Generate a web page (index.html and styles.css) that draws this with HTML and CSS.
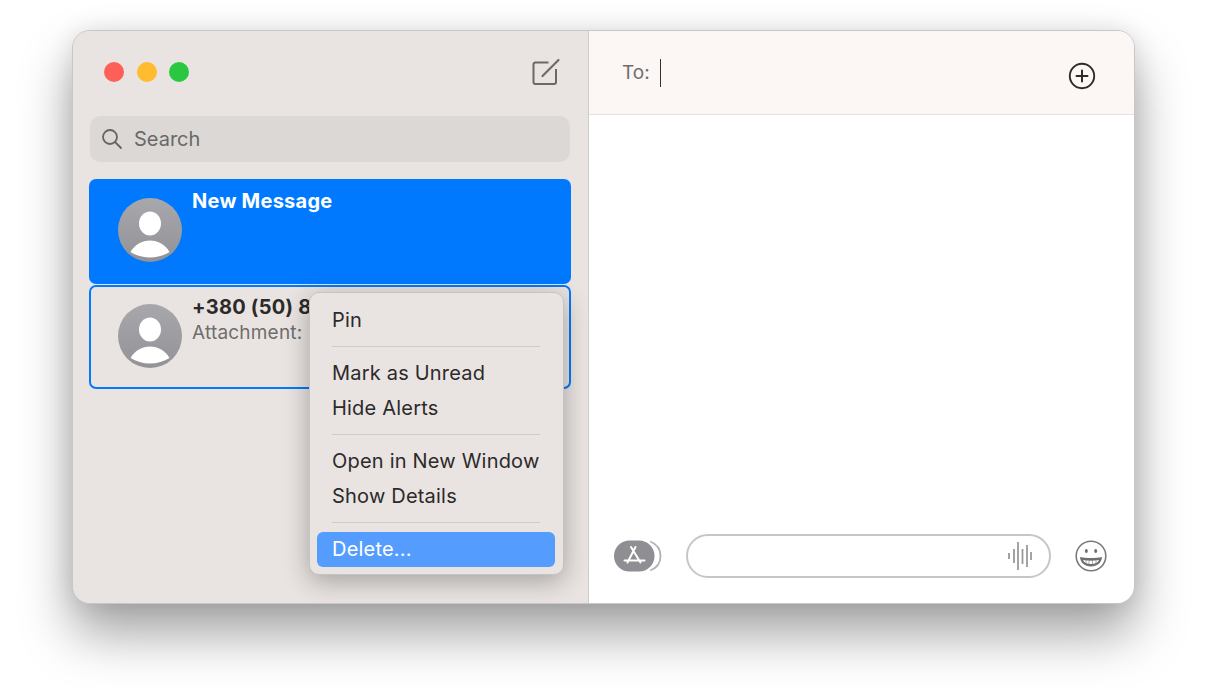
FILE: index.html
```html
<!DOCTYPE html>
<html lang="en">
<head>
<meta charset="utf-8">
<title>Messages</title>
<link rel="stylesheet" href="styles.css">
</head>
<body>
<div class="window">
  <aside class="sidebar">
    <div class="titlebar">
      <div class="lights">
        <span class="light red"></span>
        <span class="light yellow"></span>
        <span class="light green"></span>
      </div>
      <svg class="compose" width="30" height="30" viewBox="0 0 30 30" fill="none" stroke="#6a6868">
        <path d="M17.500 5.500H4.500a2 2 0 0 0-2 2V25a2 2 0 0 0 2 2H23a2 2 0 0 0 2-2V12" stroke-width="2"/>
        <path d="M11.500 19 27.500 3" stroke-width="2.200" stroke-linecap="round"/>
      </svg>
    </div>
    <div class="search">
      <svg width="22" height="22" viewBox="0 0 22 22" fill="none" stroke="#666464" stroke-width="1.800">
        <circle cx="9" cy="9" r="7"/>
        <path d="M14 14l6 6" stroke-linecap="round"/>
      </svg>
      <span>Search</span>
    </div>
    <div class="list">
      <div class="row selected">
        <svg class="avatar" viewBox="0 0 64 64"><use href="#person"/></svg>
        <div class="row-text"><div class="name">New Message</div></div>
      </div>
      <div class="row focused">
        <svg class="avatar" viewBox="0 0 64 64"><use href="#person"/></svg>
        <div class="row-text">
          <div class="name">+380 (50) 8</div>
          <div class="preview">Attachment:</div>
        </div>
      </div>
    </div>
    <div class="menu">
      <div class="item">Pin</div>
      <div class="sep"></div>
      <div class="item">Mark as Unread</div>
      <div class="item">Hide Alerts</div>
      <div class="sep"></div>
      <div class="item">Open in New Window</div>
      <div class="item">Show Details</div>
      <div class="sep"></div>
      <div class="item active">Delete...</div>
    </div>
  </aside>
  <main class="chat">
    <header class="to-bar">
      <span class="to-label">To:</span>
      <span class="caret"></span>
      <svg class="add" width="28" height="28" viewBox="0 0 28 28" fill="none" stroke="#2b2b2b">
        <circle cx="14" cy="14" r="12.200" stroke-width="1.900"/>
        <path d="M14 8.500v11M8.500 14h11" stroke-width="2" stroke-linecap="round"/>
      </svg>
    </header>
    <div class="thread"></div>
    <footer class="composer">
      <svg class="apps" width="48" height="32" viewBox="0 0 48 32" fill="none">
        <path d="M36 1.500c7 2.500 10.500 8 10.500 14.500s-3.500 12-10.500 14.500" stroke="#b4b3b3" stroke-width="1.800"/>
        <path d="M33 1.500c6 2.500 9 8 9 14.500s-3 12-9 14.500" stroke="#fff" stroke-width="1.500"/>
        <rect x="0" y="0.500" width="40.500" height="31" rx="15.500" fill="#8e8e93"/>
        <path d="M21.500 7 13.500 22.500M17 7 26.500 22.500M10.500 20.500h20" stroke="#fff" stroke-width="2" stroke-linecap="round"/>
      </svg>
      <div class="input">
        <svg width="26" height="30" viewBox="0 0 26 30" stroke="#9a9a9a" stroke-width="1.800" stroke-linecap="butt">
          <path d="M2 12v6M7 8v14M11 1v28M15.500 8v15M20 4v22M24 11v8"/>
        </svg>
      </div>
      <svg class="emoji" width="32" height="32" viewBox="0 0 32 32" fill="none">
        <circle cx="16" cy="16" r="14.800" stroke="#7a7a7a" stroke-width="1.600"/>
        <ellipse cx="11.300" cy="11" rx="1.500" ry="2.100" fill="#6f6f6f"/>
        <ellipse cx="20.700" cy="11" rx="1.500" ry="2.100" fill="#6f6f6f"/>
        <path d="M5 17c6 1.300 16 1.300 22 0-.5 6-5 9.500-11 9.500S5.500 23 5 17Z" fill="#6f6f6f"/>
        <path d="M8 20c5 1 11 1 16 0-1 2.700-4 4-8 4s-7-1.300-8-4Z" fill="#fff"/>
        <path d="M11 20v4M14 20v4.500M17.500 20v4.500M21 20v4" stroke="#8a8a8a" stroke-width=".7"/>
      </svg>
    </footer>
  </main>
</div>
<svg class="defs" width="0" height="0" aria-hidden="true">
  <defs>
    <linearGradient id="avatar-bg" x1="0" y1="0" x2="0" y2="1">
      <stop offset="0" stop-color="#a8a8ac"/>
      <stop offset="1" stop-color="#929297"/>
    </linearGradient>
    <g id="person">
      <circle cx="32" cy="32" r="32" fill="url(#avatar-bg)"/>
      <ellipse cx="32" cy="25.500" rx="11" ry="12" fill="#fff"/>
      <path d="M12.500 54C17 46.500 24 42.500 32 42.500S47 46.500 51.500 54C46 57.500 39 59.500 32 59.500S18 57.500 12.500 54Z" fill="#fff"/>
    </g>
  </defs>
</svg>
</body>
</html>
```
FILE: styles.css
```css
* { box-sizing: border-box; }
html, body { margin: 0; height: 100%; }
body {
  padding: 30px 0 0 72px;
  background: #fff;
  font-family: Inter, "Liberation Sans", sans-serif;
  overflow: hidden;
}
.defs { position: absolute; }
.window {
  display: flex;
  width: 1063px;
  height: 574px;
  border-radius: 18px;
  border: 1px solid #c9c7c6;
  background: #e9e4e1;
  box-shadow: 0 30px 52px rgba(0,0,0,.36), 0 0 24px rgba(0,0,0,.1);
  overflow: hidden;
}
.sidebar {
  position: relative;
  width: 516px;
  flex: none;
  padding: 0 17px 0 16px;
  border-right: 1px solid #cfcdcc;
  background: #e9e4e1;
}
.titlebar {
  display: flex;
  align-items: center;
  justify-content: space-between;
  height: 85px;
  padding: 0 10px 0 15px;
}
.lights { display: flex; gap: 12.500px; margin-top: -3px; }
.light { width: 20px; height: 20px; border-radius: 50%; }
.red { background: #fe5f57; }
.yellow { background: #febc2e; }
.green { background: #2ac840; }
.compose { margin-top: -3px; }
.search {
  display: flex;
  align-items: center;
  gap: 11px;
  height: 46px;
  margin: 0 1px;
  padding: 0 11px;
  border-radius: 10px;
  background: #dbd8d6;
  color: #6a6868;
  font-size: 20px;
}
.list { display: flex; flex-direction: column; gap: 1px; margin-top: 17px; }
.row {
  display: flex;
  gap: 10.500px;
  padding: 0 0 0 28.500px;
  border-radius: 7px;
  white-space: nowrap;
  overflow: hidden;
}
.selected { height: 105px; background: #0079ff; color: #fff; }
.focused { height: 104px; border: 2px solid #007aff; padding-left: 26.500px; color: #2c2a2a; }
.avatar { width: 64px; height: 64px; margin-top: 19px; flex: none; }
.focused .avatar { margin-top: 17px; }
.row-text { padding-top: 9px; }
.focused .row-text { padding-top: 7px; width: 117px; overflow: hidden; }
.name { font-size: 20px; font-weight: 700; line-height: 26px; letter-spacing: .25px; }
.preview { font-size: 19px; line-height: 26px; color: #6f6d6d; letter-spacing: .2px; }
.menu {
  position: absolute;
  left: 236px;
  top: 261px;
  width: 255px;
  height: 283px;
  padding: 10px 8px 9px 7px;
  border-radius: 10px;
  border: 1px solid #c6c4c3;
  background: #e9e4e1;
  color: #2c2a2a;
  font-size: 20px;
  letter-spacing: .2px;
  box-shadow: 0 6px 26px rgba(0,0,0,.3);
}
.item {
  height: 35.500px;
  line-height: 35.500px;
  padding: 0 15px;
  border-radius: 6px;
  white-space: nowrap;
}
.sep { height: 1px; margin: 7px 15px 9px; background: #cdcbca; }
.active { background: #559cff; color: #fff; }
.chat {
  flex: 1;
  display: flex;
  flex-direction: column;
  min-width: 0;
  background: #fff;
}
.to-bar {
  display: flex;
  align-items: center;
  height: 84px;
  padding: 0 38px 0 33px;
  background: #fcf6f4;
  border-bottom: 1px solid #e4e1df;
  flex: none;
}
.to-label { color: #6f6d6d; font-size: 19px; }
.caret { width: 1.500px; height: 28px; margin-left: 10px; background: #333; }
.add { margin-left: auto; margin-top: 6px; }
.thread { flex: 1; }
.composer {
  display: flex;
  align-items: center;
  height: 94px;
  padding: 0 27px 0 25px;
  flex: none;
}
.apps { flex: none; }
.input {
  display: flex;
  align-items: center;
  justify-content: flex-end;
  width: 365px;
  height: 44px;
  margin-left: 24px;
  padding-right: 16px;
  border: 2px solid #c8c6c5;
  border-radius: 22px;
  background: #fff;
}
.emoji { margin-left: auto; }
```
